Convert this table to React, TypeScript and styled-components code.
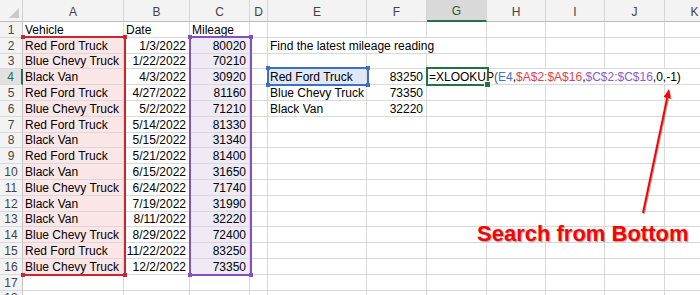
import React from 'react';
import styled, { createGlobalStyle } from 'styled-components';

const GlobalStyle = createGlobalStyle`
  html, body {
    margin: 0;
    padding: 0;
    background: #fff;
  }
  body {
    width: 700px;
    height: 295px;
    overflow: hidden;
    font-family: "Liberation Sans", Arial, sans-serif;
  }
`;

const COLS = ['A', 'B', 'C', 'D', 'E', 'F', 'G', 'H', 'I', 'J', 'K'];
const WIDTHS = [23, 101, 66, 60, 18, 99, 60, 60, 59, 59, 60, 60];
const ROW_COUNT = 18;
const SELECTED_COL = 'G';
const SELECTED_ROW = 4;

const PINK = '#fbe6e7';
const LAVENDER = '#eeebf6';
const ICE = '#dfe8f6';

const log: [string, string, number][] = [
    ['Red Ford Truck', '1/3/2022', 80020],
    ['Blue Chevy Truck', '1/22/2022', 70210],
    ['Black Van', '4/3/2022', 30920],
    ['Red Ford Truck', '4/27/2022', 81160],
    ['Blue Chevy Truck', '5/2/2022', 71210],
    ['Red Ford Truck', '5/14/2022', 81330],
    ['Black Van', '5/15/2022', 31340],
    ['Red Ford Truck', '5/21/2022', 81400],
    ['Black Van', '6/15/2022', 31650],
    ['Blue Chevy Truck', '6/24/2022', 71740],
    ['Black Van', '7/19/2022', 31990],
    ['Black Van', '8/11/2022', 32220],
    ['Blue Chevy Truck', '8/29/2022', 72400],
    ['Red Ford Truck', '11/22/2022', 83250],
    ['Blue Chevy Truck', '12/2/2022', 73350],
];

const results: Record<number, [string, number]> = {
    4: ['Red Ford Truck', 83250],
    5: ['Blue Chevy Truck', 73350],
    6: ['Black Van', 32220],
};

interface CellData {
    text?: React.ReactNode;
    align?: 'left' | 'right';
    span?: number;
    fill?: string;
}

const Formula = () => (
    <FormulaText>
        =XLOOKUP<Paren>(</Paren>
        <Ref $color="#3f74cf">E4</Ref>,
        <Ref $color="#e0414b">$A$2:$A$16</Ref>,
        <Ref $color="#8d5cc6">$C$2:$C$16</Ref>,0,-1)
    </FormulaText>
);

const buildRow = (r: number): CellData[] => {
    const cells: CellData[] = [];
    if (r === 1) {
        cells.push({ text: 'Vehicle' }, { text: 'Date' }, { text: 'Mileage' });
    } else if (r >= 2 && r <= 16) {
        const [vehicle, date, miles] = log[r - 2];
        cells.push(
            { text: vehicle, fill: PINK },
            { text: date, align: 'right' },
            { text: miles, align: 'right', fill: LAVENDER },
        );
    } else {
        cells.push({}, {}, {});
    }
    cells.push({});

    if (r === 2) {
        cells.push({ text: 'Find the latest mileage reading', span: 3 }, {}, {}, {}, {});
    } else if (results[r]) {
        const [name, miles] = results[r];
        cells.push(
            { text: name, fill: r === 4 ? ICE : undefined },
            { text: miles, align: 'right' },
        );
        if (r === 4) {
            cells.push({ text: <Formula />, span: 5 });
        } else {
            cells.push({}, {}, {}, {}, {});
        }
    } else {
        cells.push({}, {}, {}, {}, {}, {}, {});
    }
    return cells;
};

const RangeHighlight = ({ col, rows, color, fillHandle, openLeft }: {
    col: string;
    rows: string;
    color: string;
    fillHandle?: boolean;
    openLeft?: boolean;
}) => (
    <RangeBox style={{ gridColumn: col, gridRow: rows }} $color={color} $openLeft={openLeft}>
        {fillHandle ? (
            <FillHandle $color={color} />
        ) : (
            <>
                <Handle $color={color} $x="left" $y="top" />
                <Handle $color={color} $x="right" $y="top" />
                <Handle $color={color} $x="left" $y="bottom" />
                <Handle $color={color} $x="right" $y="bottom" />
            </>
        )}
    </RangeBox>
);

const App = () => {
    const rowNums = Array.from({ length: ROW_COUNT }, (_, i) => i + 1);
    return (
        <>
            <GlobalStyle />
            <Sheet>
                <Corner>
                    <svg width="23" height="22" viewBox="0 0 23 22">
                        <polygon points="9,18 19,18 19,8" fill="#c9c9c9" />
                    </svg>
                </Corner>
                {COLS.map((c) => (
                    <ColHead key={c} $active={c === SELECTED_COL}>{c}</ColHead>
                ))}
                {rowNums.map((r) => (
                    <React.Fragment key={r}>
                        <RowHead $active={r === SELECTED_ROW}>{r}</RowHead>
                        {buildRow(r).map((cell, i) => (
                            <Cell
                                key={i}
                                $align={cell.align}
                                $fill={cell.fill}
                                $span={cell.span}
                            >
                                {cell.text}
                            </Cell>
                        ))}
                    </React.Fragment>
                ))}

                <RangeHighlight col="2 / 3" rows="3 / 18" color="#c5282f" openLeft />
                <RangeHighlight col="4 / 5" rows="3 / 18" color="#7f52c0" />
                <RangeHighlight col="6 / 7" rows="5 / 6" color="#3d6fc8" />
                <RangeHighlight col="8 / 9" rows="5 / 6" color="#217346" fillHandle />

                <Callout>Search from Bottom</Callout>
                <ArrowLayer width="700" height="295" viewBox="0 0 700 295">
                    <line x1="643" y1="213" x2="667.2" y2="97.8" stroke="#ff0000" strokeWidth="2" />
                    <polygon points="669,89 670.8,98.6 663.6,97.1" fill="#ff0000" />
                </ArrowLayer>
            </Sheet>
        </>
    );
};

export default App;

const Sheet = styled.div`
    position: relative;
    display: grid;
    grid-template-columns: ${WIDTHS.map((w) => `${w}px`).join(' ')};
    grid-template-rows: 22px repeat(${ROW_COUNT}, 15.8px);
    width: 700px;
    height: 295px;
    overflow: hidden;
    font-size: 12px;
    color: #000;
`;

const Corner = styled.div`
    background: #f3f3f3;
    border-right: 1px solid #d0d0d0;
    border-bottom: 1px solid #bdbdbd;
    box-sizing: border-box;
    svg {
        display: block;
    }
`;

const ColHead = styled.div<{ $active?: boolean }>`
    display: flex;
    align-items: center;
    justify-content: center;
    padding-top: 2px;
    box-sizing: border-box;
    background: ${(p) => (p.$active ? '#d9d9d9' : '#f3f3f3')};
    color: ${(p) => (p.$active ? '#1e5e3b' : '#444')};
    border-right: 1px solid #d6d6d6;
    border-bottom: ${(p) => (p.$active ? '2px solid #217346' : '1px solid #bdbdbd')};
    font-size: 12px;
`;

const RowHead = styled.div<{ $active?: boolean }>`
    display: flex;
    align-items: flex-end;
    justify-content: center;
    box-sizing: border-box;
    line-height: 14px;
    background: ${(p) => (p.$active ? '#e1e1e1' : '#f3f3f3')};
    color: ${(p) => (p.$active ? '#217346' : '#444')};
    border-right: ${(p) => (p.$active ? '2px solid #217346' : '1px solid #c4c4c4')};
    border-bottom: 1px solid #dadada;
    font-size: 12px;
`;

const Cell = styled.div<{ $align?: 'left' | 'right'; $fill?: string; $span?: number }>`
    display: flex;
    align-items: flex-end;
    justify-content: ${(p) => (p.$align === 'right' ? 'flex-end' : 'flex-start')};
    grid-column: ${(p) => (p.$span ? `span ${p.$span}` : 'auto')};
    box-sizing: border-box;
    padding: ${(p) => (p.$align === 'right' ? '0 3px 0 0' : '0 0 0 2px')};
    background: ${(p) => p.$fill || 'transparent'};
    border-right: 1px solid #d9d9d9;
    border-bottom: 1px solid #d9d9d9;
    line-height: 14px;
    white-space: nowrap;
    overflow: visible;
`;

const FormulaText = styled.span`
    color: #000;
`;

const Paren = styled.span`
    color: #1f6b46;
`;

const Ref = styled.span<{ $color: string }>`
    color: ${(p) => p.$color};
`;

const RangeBox = styled.div<{ $color: string; $openLeft?: boolean }>`
    position: absolute;
    top: -2px;
    left: -1px;
    right: -2px;
    bottom: -1px;
    border: 2px solid ${(p) => p.$color};
    border-left-color: ${(p) => (p.$openLeft ? 'transparent' : p.$color)};
    pointer-events: none;
`;

const Handle = styled.div<{ $color: string; $x: 'left' | 'right'; $y: 'top' | 'bottom' }>`
    position: absolute;
    width: 4px;
    height: 4px;
    background: ${(p) => p.$color};
    ${(p) => p.$x}: -3px;
    ${(p) => p.$y}: -3px;
`;

const FillHandle = styled.div<{ $color: string }>`
    position: absolute;
    right: -4px;
    bottom: -4px;
    width: 5px;
    height: 5px;
    background: ${(p) => p.$color};
    border: 1px solid #fff;
`;

const Callout = styled.div`
    position: absolute;
    left: 477px;
    top: 223px;
    font-size: 22px;
    line-height: 22px;
    font-weight: bold;
    color: #ff0000;
    white-space: nowrap;
    text-shadow: 1px 1px 1px rgba(0, 0, 0, 0.35);
`;

const ArrowLayer = styled.svg`
    position: absolute;
    left: 0;
    top: 0;
    pointer-events: none;
    filter: drop-shadow(1px 1px 0.5px rgba(0, 0, 0, 0.3));
`;
